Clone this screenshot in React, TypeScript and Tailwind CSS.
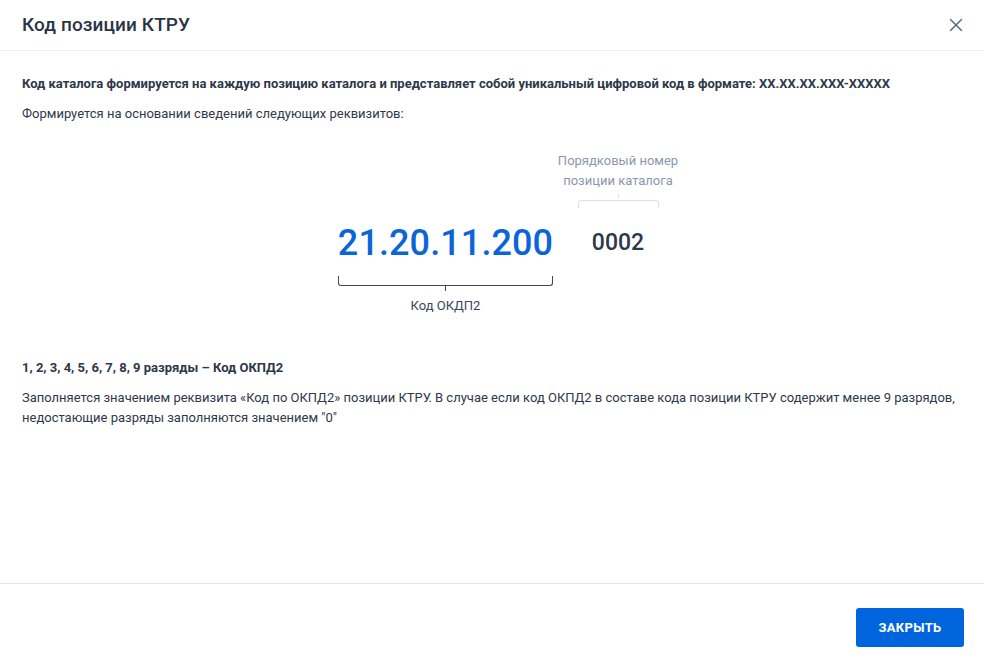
import { X } from 'lucide-react';

// Схема кода позиции КТРУ: код ОКПД2 + порядковый номер
function CodeDiagram() {
  return (
    <div className="flex pl-[316px] pt-[27px]">
      <div className="flex items-start gap-[4px]">
        <div className="w-[215px] flex flex-col items-center pt-[71px]">
          <div className="text-[36px] leading-[42px] font-medium text-[#0a66d8] tracking-[0.1px]">21.20.11.200</div>
          <div className="mt-[12px] w-[215px] h-[10px] border-x border-b border-[#3b475b] rounded-b-[3px]" />
          <div className="w-px h-[5px] bg-[#3b475b]" />
          <div className="mt-[6px] text-[13px] leading-[18px] text-[#3b475b]">Код ОКДП2</div>
        </div>
        <div className="w-[122px] flex flex-col items-center">
          <div className="text-[13px] leading-[20px] text-[#8c97ab] text-center whitespace-nowrap">
            Порядковый номер
            <br />
            позиции каталога
          </div>
          <div className="mt-[3px] w-px h-[4px] bg-[#dde0ea]" />
          <div className="mt-[2px] w-[81px] h-[8px] border-x border-t border-[#dde0ea] rounded-t-[3px]" />
          <div className="mt-[21px] text-[23px] leading-[28px] font-medium text-[#2e384a]">0002</div>
        </div>
      </div>
    </div>
  );
}

export default function App() {
  return (
    <div className="w-[984px] h-[667px] bg-white flex flex-col text-[#2e384a]" style={{ fontFamily: 'Roboto, "Noto Sans", sans-serif' }}>
      <div className="h-[51px] shrink-0 flex items-center justify-between pl-[22px] pr-[17px] border-b border-[#eceef3]">
        <h1 className="text-[19px] font-medium text-[#2b3445] tracking-[0.1px]">Код позиции КТРУ</h1>
        <button className="text-[#5c6a80]">
          <X size={22} strokeWidth={1.6} />
        </button>
      </div>

      <div className="flex-1 px-[22px] pt-[23px]">
        <p className="text-[13px] leading-[20px] font-bold">
          Код каталога формируется на каждую позицию каталога и представляет собой уникальный цифровой код в формате: XX.XX.XX.XXX-XXXXX
        </p>
        <p className="mt-[10px] text-[13px] leading-[20px]">Формируется на основании сведений следующих реквизитов:</p>

        <CodeDiagram />

        <p className="mt-[43px] text-[13px] leading-[20px] font-bold">1, 2, 3, 4, 5, 6, 7, 8, 9 разряды – Код ОКПД2</p>
        <p className="mt-[10px] text-[13px] leading-[20px]">
          Заполняется значением реквизита «Код по ОКПД2» позиции КТРУ. В случае если код ОКПД2 в составе кода позиции КТРУ содержит менее 9 разрядов,
          недостающие разряды заполняются значением "0"
        </p>
      </div>

      <div className="h-[84px] shrink-0 border-t border-[#e3e5ec] flex items-start justify-end pt-[24px] pr-[20px]">
        <button className="w-[108px] h-[39px] rounded-[3px] bg-[#0065dd] text-white text-[13px] font-bold tracking-[0.3px]">ЗАКРЫТЬ</button>
      </div>
    </div>
  );
}
